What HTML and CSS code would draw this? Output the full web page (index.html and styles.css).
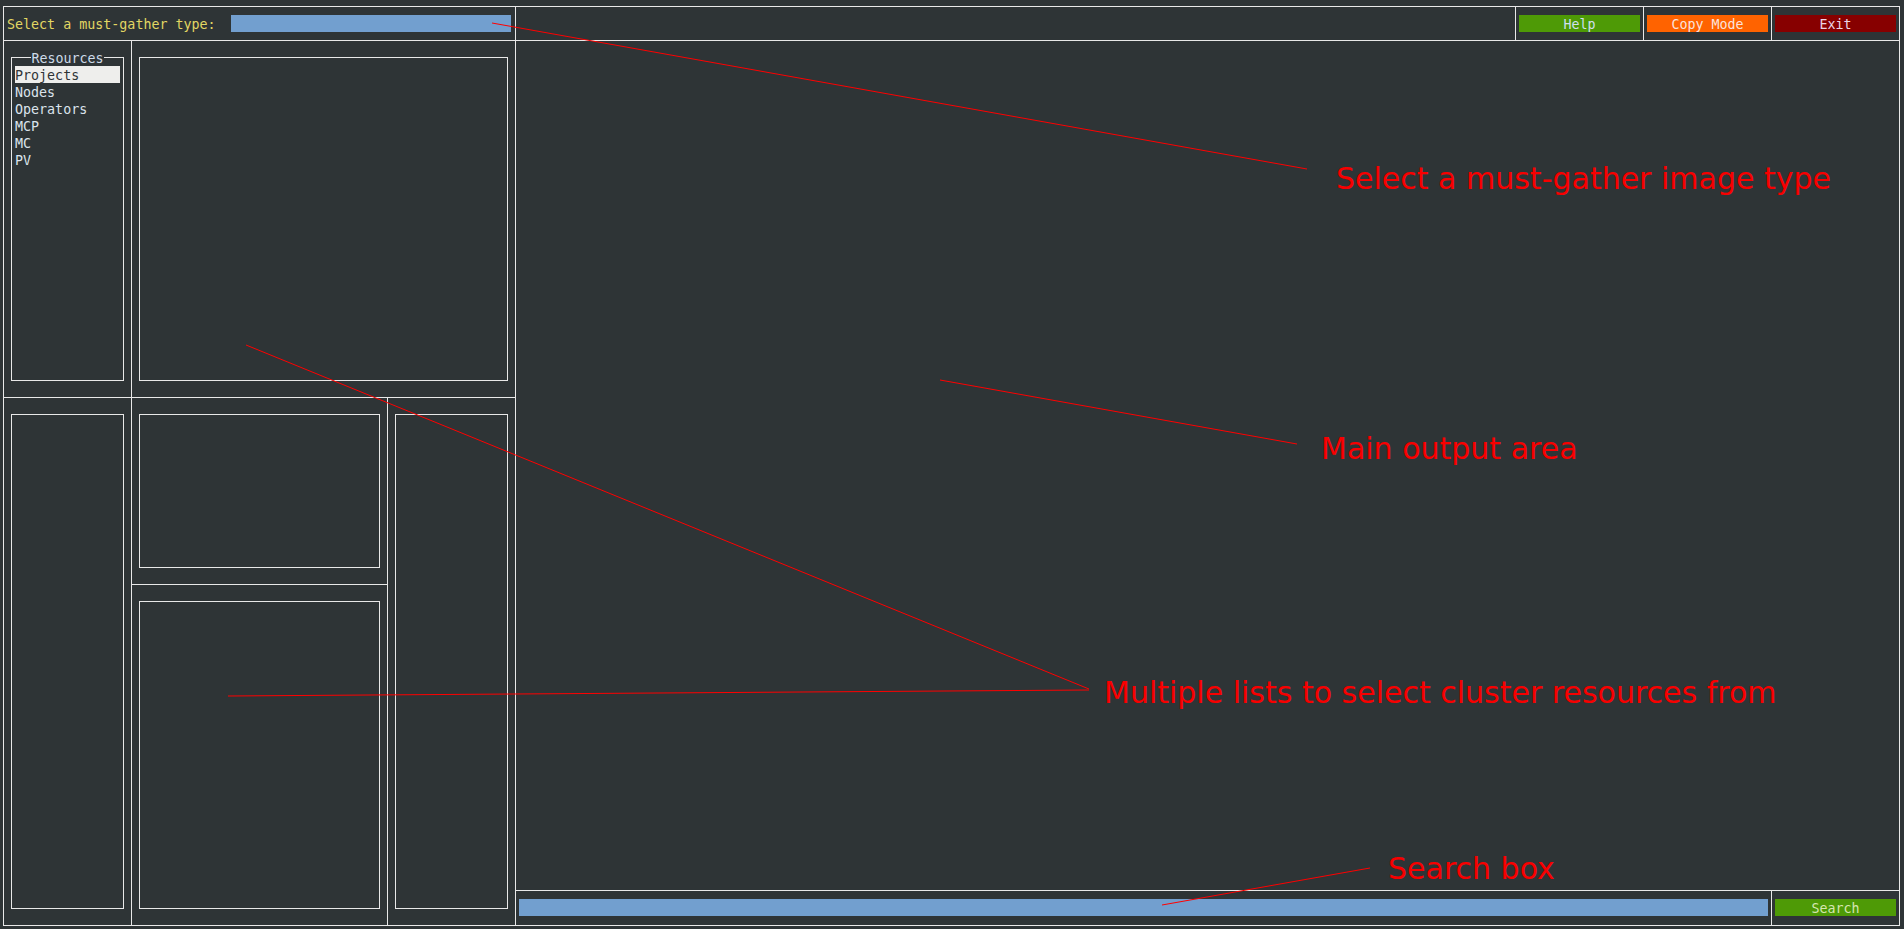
FILE: index.html
```html
<!DOCTYPE html>
<html>
<head>
<meta charset="utf-8">
<link rel="stylesheet" href="styles.css">
</head>
<body>
<div class="app">
  <div class="topbar">
    <div class="tb-left">
      <span class="label">Select a must-gather type:</span>
      <div class="input type-input"></div>
    </div>
    <div class="tb-spacer"></div>
    <div class="tb-btn"><div class="btn green help">Help</div></div>
    <div class="tb-btn"><div class="btn orange">Copy Mode</div></div>
    <div class="tb-btn last"><div class="btn darkred">Exit</div></div>
  </div>
  <div class="body">
    <div class="left">
      <div class="left-top">
        <div class="pane narrow">
          <div class="box titled">
            <div class="title"><span>Resources</span></div>
            <ul class="list">
              <li class="selected">Projects</li>
              <li>Nodes</li>
              <li>Operators</li>
              <li>MCP</li>
              <li>MC</li>
              <li>PV</li>
            </ul>
          </div>
        </div>
        <div class="pane grow"><div class="box"></div></div>
      </div>
      <div class="left-bottom">
        <div class="pane narrow"><div class="box"></div></div>
        <div class="col-mid">
          <div class="pane mid-top"><div class="box"></div></div>
          <div class="pane grow"><div class="box"></div></div>
        </div>
        <div class="pane grow"><div class="box"></div></div>
      </div>
    </div>
    <div class="main">
      <div class="output"></div>
      <div class="searchbar">
        <div class="sb-input-cell"><div class="input"></div></div>
        <div class="sb-btn-cell"><div class="btn green search">Search</div></div>
      </div>
    </div>
  </div>
</div>
<svg class="annot" width="1904" height="929" viewBox="0 0 1904 929">
  <line x1="492" y1="23" x2="1307" y2="169"/>
  <line x1="940" y1="380" x2="1297" y2="444"/>
  <line x1="246" y1="345" x2="1089" y2="689"/>
  <line x1="228" y1="696" x2="1089" y2="690"/>
  <line x1="1162" y1="905" x2="1370" y2="868"/>
  <text x="1336" y="189">Select a must-gather image type</text>
  <text x="1321" y="459">Main output area</text>
  <text x="1104" y="703">Multiple lists to select cluster resources from</text>
  <text x="1388" y="879">Search box</text>
</svg>
</body>
</html>
```
FILE: styles.css
```css
* { box-sizing: border-box; }
html, body {
  margin: 0;
  padding: 0;
  background: #2e3436;
  overflow: hidden;
}
body {
  width: 1904px;
  height: 929px;
  position: relative;
  font-family: "DejaVu Sans Mono", "Liberation Mono", monospace;
  font-size: 13.33px;
  line-height: 17px;
  color: #dbe3ec;
}
.app {
  margin: 6px 0 0 3px;
  width: 1897px;
  height: 920px;
  border: 1px solid #e8e8e8;
  display: flex;
  flex-direction: column;
}
.topbar {
  height: 34px;
  border-bottom: 1px solid #e8e8e8;
  display: flex;
  flex: 0 0 34px;
}
.tb-left {
  width: 512px;
  border-right: 1px solid #e8e8e8;
  padding: 8px 4px 0 3px;
  display: flex;
  align-items: flex-start;
}
.label {
  color: #e2d763;
  white-space: pre;
  line-height: 17px;
  padding-top: 1px;
}
.input {
  height: 17px;
  background: #729fcf;
}
.type-input {
  width: 280px;
  margin-left: auto;
}
.tb-spacer {
  flex: 1;
  border-right: 1px solid #e8e8e8;
}
.tb-btn {
  width: 128px;
  border-right: 1px solid #e8e8e8;
  padding: 8px 3px 0 3px;
}
.tb-btn.last {
  width: 127px;
  border-right: none;
}
.btn {
  height: 17px;
  line-height: 17px;
  padding-top: 1px;
  text-align: center;
  white-space: pre;
  overflow: visible;
}
.green { background: #4e9a06; color: #cfe0ee; }
.search { color: #d6e6b0; }
.orange { background: #ff6300; color: #fbe2dc; }
.darkred { background: #870000; color: #ecd6e6; }

.body {
  flex: 1;
  display: flex;
  min-height: 0;
}
.left {
  width: 512px;
  border-right: 1px solid #e8e8e8;
  display: flex;
  flex-direction: column;
}
.left-top {
  height: 357px;
  flex: 0 0 357px;
  border-bottom: 1px solid #e8e8e8;
  display: flex;
}
.left-bottom {
  flex: 1;
  display: flex;
}
.pane {
  padding: 16px 7px;
  display: flex;
}
.pane .box {
  flex: 1;
  border: 1px solid #e8e8e8;
}
.narrow {
  width: 128px;
  flex: 0 0 128px;
  border-right: 1px solid #e8e8e8;
}
.grow { flex: 1; }
.col-mid {
  width: 256px;
  flex: 0 0 256px;
  border-right: 1px solid #e8e8e8;
  display: flex;
  flex-direction: column;
}
.mid-top {
  height: 187px;
  flex: 0 0 187px;
  border-bottom: 1px solid #e8e8e8;
}
.titled { position: relative; }
.title {
  position: absolute;
  top: -8px;
  left: 0;
  right: 0;
  text-align: center;
  line-height: 17px;
}
.title span {
  background: #2e3436;
  color: #cddbe9;
}
.list {
  list-style: none;
  margin: 0;
  padding: 8px 3px 0 3px;
}
.list li {
  height: 17px;
  line-height: 17px;
  padding-top: 1px;
  white-space: pre;
}
.list li.selected {
  background: #eeeeec;
  color: #2e3436;
}
.main {
  flex: 1;
  display: flex;
  flex-direction: column;
}
.output {
  flex: 1;
  border-bottom: 1px solid #e8e8e8;
}
.searchbar {
  height: 34px;
  flex: 0 0 34px;
  display: flex;
}
.sb-input-cell {
  flex: 1;
  border-right: 1px solid #e8e8e8;
  padding: 8px 3px 0 3px;
}
.sb-btn-cell {
  width: 127px;
  padding: 8px 3px 0 3px;
}
.annot {
  position: absolute;
  left: 0;
  top: 0;
  pointer-events: none;
}
.annot line {
  stroke: #ff0000;
  stroke-width: 1;
}
.annot text {
  fill: #f80000;
  font-family: "DejaVu Sans", sans-serif;
  font-size: 30px;
}
```
